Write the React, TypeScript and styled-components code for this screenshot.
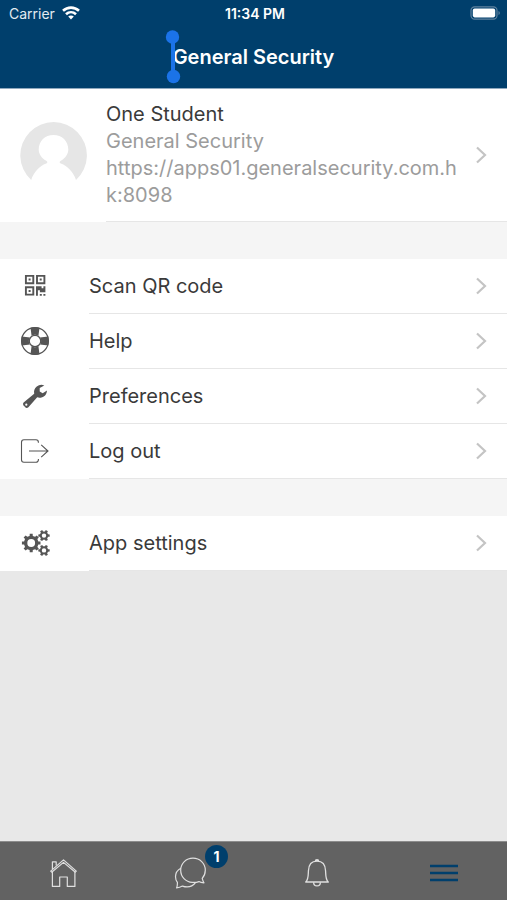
import React from "react";
import styled, { createGlobalStyle } from "styled-components";

const navy = "#003f6c";
const ink = "#3a3a3a";
const iconInk = "#555555";

const GlobalStyle = createGlobalStyle`
  *, *::before, *::after { box-sizing: border-box; }
  body { margin: 0; background: #e8e8e8; font-family: Inter, "Liberation Sans", sans-serif; }
  button { font: inherit; color: inherit; border: 0; padding: 0; background: none; cursor: pointer; text-align: left; }
  h1, h2, p { margin: 0; font-weight: 400; }
  svg { display: block; flex: none; }
`;

const Screen = styled.div`
  min-height: 100vh;
  display: flex;
  flex-direction: column;
  color: ${ink};
`;

const Header = styled.header`
  background: ${navy};
  color: #fff;
  border-bottom: 1px solid #8fa9bf;
`;

const StatusBar = styled.div`
  display: grid;
  grid-template-columns: 1fr auto 1fr;
  align-items: center;
  height: 26px;
  padding: 0 6px 0 9px;
  font-size: 14px;
`;

const Carrier = styled.span`
  display: flex;
  align-items: center;
  gap: 7px;
  color: #e3ebf1;
`;

const Clock = styled.time`
  font-size: 14px;
  font-weight: 600;
`;

const Battery = styled.span`
  justify-self: end;
`;

const TitleBar = styled.div`
  height: 62px;
  display: flex;
  justify-content: center;
  align-items: center;
`;

const Title = styled.h1`
  position: relative;
  font-size: 20px;
  line-height: 28px;
  font-weight: 600;
`;

const SelectionHandle = styled.svg`
  position: absolute;
  left: -8px;
  top: -13px;
`;

const Main = styled.main`
  flex: 1;
`;

const List = styled.div`
  background: #fff;
`;

const Gap = styled.div`
  height: 37px;
  background: #f5f5f5;
`;

const ProfileRow = styled.button`
  display: flex;
  align-items: center;
  width: 100%;
  padding-left: 20px;
`;

const ProfileBody = styled.span`
  flex: 1;
  min-width: 0;
  margin-left: 19px;
  padding: 11px 19px 12px 0;
  display: flex;
  align-items: center;
  border-bottom: 1px solid #e6e6e6;
`;

const ProfileText = styled.span`
  flex: 1;
  min-width: 0;
  max-width: 356px;
  margin-right: auto;
  display: flex;
  flex-direction: column;
  font-size: 20px;
  line-height: 27px;
  color: #9c9c9c;
  word-break: break-all;
`;

const ProfileName = styled.span`
  line-height: 28px;
  color: ${ink};
`;

const Row = styled.button`
  display: flex;
  align-items: center;
  width: 100%;
  height: 55px;
  padding-left: 20px;
`;

const RowIcon = styled.span`
  width: 69px;
  padding-bottom: 2px;
  color: ${iconInk};
`;

const RowBody = styled.span`
  flex: 1;
  height: 55px;
  display: flex;
  align-items: center;
  justify-content: space-between;
  padding-right: 19px;
  border-bottom: 1px solid #e6e6e6;
  font-size: 20px;
`;

const TabBar = styled.nav`
  display: grid;
  grid-template-columns: repeat(4, 1fr);
  height: 59px;
  background: #626262;
  border-top: 1px solid #8c8c8c;
`;

const Tab = styled.button<{ $active?: boolean }>`
  position: relative;
  display: flex;
  justify-content: center;
  align-items: center;
  padding-top: 3px;
  color: ${(p) => (p.$active ? navy : "#e0e0e0")};
`;

const TabBadge = styled.span`
  position: absolute;
  left: calc(50% + 15px);
  top: 3px;
  width: 23px;
  height: 23px;
  border-radius: 50%;
  background: ${navy};
  color: #fff;
  font-size: 14px;
  line-height: 23px;
  font-weight: 700;
  text-align: center;
`;

const Chevron = () => (
  <svg width="14" height="18" viewBox="0 0 14 18" fill="none" stroke="#c4c4c4" strokeWidth="2.2" aria-hidden>
    <path d="M3 1.5 11 9 3 16.5" />
  </svg>
);

const WifiIcon = () => (
  <svg width="18" height="14" viewBox="0 0 18 14" fill="none" stroke="#fff" strokeWidth="2.6" aria-label="Wi-Fi">
    <path d="M1 4.8C5.6.5 12.4.5 17 4.8" />
    <path d="M4 8.2C6.9 5.5 11.1 5.5 14 8.2" />
    <path d="M6.2 10.6C7.8 9.1 10.2 9.1 11.8 10.6L9 13.6Z" fill="#fff" stroke="none" />
  </svg>
);

const BatteryIcon = () => (
  <svg width="31" height="14" viewBox="0 0 31 14" aria-label="Battery full">
    <rect x="1" y=".8" width="26" height="12.4" rx="3.6" fill="none" stroke="#5f829e" strokeWidth="1.2" />
    <rect x="2.8" y="2.6" width="22.4" height="8.8" rx="1.8" fill="#fff" />
    <path d="M28.5 5v4c1.8-.6 1.8-3.4 0-4Z" fill="#5f829e" />
  </svg>
);

const Avatar = () => (
  <svg width="67" height="67" viewBox="0 0 67 67" aria-hidden>
    <path
      fill="#e6e6e6"
      d="M11.2 58A33.3 33.3 0 1 1 56 58C53.5 50 47.5 44 40.8 41.5C39.2 40.9 39.3 39.7 40.8 38.8C45.5 36 48.3 32 48.3 27.5C48.3 19 42 13 33.5 13S18.7 19 18.7 27.5C18.7 32 21.5 36 26.2 38.8C27.7 39.7 27.8 40.9 26.2 41.5C19.5 44 13.7 50 11.2 58Z"
    />
  </svg>
);

const QrIcon = () => (
  <svg width="30" height="30" viewBox="0 0 30 30" fill="none" stroke="currentColor" strokeWidth="1.9" aria-hidden>
    <path d="M5.9 4.9h7.4v7.4H5.9ZM17 4.9h7.4v7.4H17ZM5.9 16.2h7.4v7.4H5.9Z" />
    <path d="M8.6 7.6h2v2h-2ZM19.7 7.6h2v2h-2ZM8.6 18.9h2v2h-2Z" fill="currentColor" stroke="none" />
    <path
      fill="currentColor"
      stroke="none"
      d="M16 15.2h5.6v2h1.8v-2h2v6.1h-5.5v-2h-2v5.4H16ZM19.8 23h2v1.8h-2ZM23.4 23h2v1.8h-2Z"
    />
  </svg>
);

const BuoyIcon = () => (
  <svg width="30" height="30" viewBox="0 0 30 30" fill="none" stroke="currentColor" aria-hidden>
    <circle cx="15" cy="15" r="13.4" strokeWidth="1.2" />
    <circle cx="15" cy="15" r="5.7" strokeWidth="1.2" />
    <path
      fill="currentColor"
      stroke="none"
      d="M10.5 1.8a14 14 0 0 1 9 0L18.4 10a6 6 0 0 0-6.8 0ZM28.2 10.5a14 14 0 0 1 0 9L20 18.4a6 6 0 0 0 0-6.8ZM19.5 28.2a14 14 0 0 1-9 0L11.6 20a6 6 0 0 0 6.8 0ZM1.8 19.5a14 14 0 0 1 0-9L10 11.6a6 6 0 0 0 0 6.8Z"
    />
  </svg>
);

const WrenchIcon = () => (
  <svg width="30" height="30" viewBox="0 0 30 30" aria-hidden>
    <path
      fill="currentColor"
      fillRule="evenodd"
      d="M14.2 12.7A7.4 7.4 0 0 1 24.3 4.4L19.7 7.1V10.6L22.7 12.2L27 9.6A7.4 7.4 0 0 1 17.2 16.3L8.4 26.3A2.8 2.8 0 0 1 5.8 26.8L3.3 24.3A2.6 2.6 0 0 1 3.6 21.5ZM6.3 22.6a1.1 1.1 0 1 0 0 2.2a1.1 1.1 0 0 0 0-2.2Z"
    />
  </svg>
);

const LogoutIcon = () => (
  <svg width="30" height="30" viewBox="0 0 30 30" fill="none" stroke="currentColor" strokeWidth="1.1" aria-hidden>
    <path d="M18.4 6.7V6.2a2.4 2.4 0 0 0-2.4-2.4H3.9A2.4 2.4 0 0 0 1.5 6.2V23.8A2.4 2.4 0 0 0 3.9 26.2H16a2.4 2.4 0 0 0 2.4-2.4V23" />
    <path d="M9 15H28M21.2 8.8 28 15l-6.8 6.2" />
  </svg>
);

function gearPath(cx: number, cy: number, outer: number, inner: number, hole: number, teeth: number, start = 0) {
  const step = (Math.PI * 2) / teeth;
  const at = (radius: number, angle: number) =>
    `${(cx + radius * Math.cos(angle)).toFixed(2)} ${(cy + radius * Math.sin(angle)).toFixed(2)}`;
  const points: string[] = [];
  for (let i = 0; i < teeth; i++) {
    const a = start + i * step;
    points.push(at(inner, a - step * 0.28), at(outer, a - step * 0.2), at(outer, a + step * 0.2), at(inner, a + step * 0.28));
  }
  return `M${points.join("L")}ZM${cx - hole} ${cy}a${hole} ${hole} 0 1 0 ${hole * 2} 0a${hole} ${hole} 0 1 0 ${-hole * 2} 0Z`;
}

const GearsIcon = () => (
  <svg width="30" height="30" viewBox="0 0 30 30" fill="currentColor" fillRule="evenodd" aria-hidden>
    <path d={gearPath(11.2, 15, 9.4, 7.3, 3.9, 8)} />
    <path d={gearPath(24, 7.6, 5.8, 4.3, 2.2, 6)} />
    <path d={gearPath(24, 22.4, 5.8, 4.3, 2.2, 6)} />
  </svg>
);

const HomeIcon = () => (
  <svg width="30" height="30" viewBox="0 0 30 30" fill="none" stroke="currentColor" strokeWidth="1.2" strokeLinejoin="round" aria-hidden>
    <path d="M2.7 13.1 15.5 1.9 28.3 13.1 27.3 14.2 15.5 4.4 3.7 14.2Z" />
    <path d="M4.4 11V3.8H8.2V7.4M4.4 14V28.4H11.7V19H19.3V28.4H26.9V14" />
  </svg>
);

const ChatIcon = () => (
  <svg width="32" height="32" viewBox="0 0 32 32" fill="none" stroke="currentColor" strokeWidth="1.2" strokeLinejoin="round" aria-hidden>
    <path d="M30 25.8C27.9 25.7 26.3 25.4 24.9 24.6C22.9 25.3 20.5 25.6 18.3 25.4C11.6 24.9 6.7 19.7 6.7 13.2C6.7 6.4 12.2 1.2 19 1.2S31.3 6.4 31.3 13.2C31.3 16.4 30.2 19.1 28.2 21.3C28.6 22.9 29.1 24.5 30 25.8Z" />
    <path d="M6.8 11.2C3.5 13 1.5 16.1 1.5 19.7C1.5 22.3 2.4 24 3.4 25.4C3.5 27.4 3.2 29.3 2.6 30.9C4.8 30.8 6.6 30.2 8.4 29.1C13.3 30.7 18.5 29.5 21.5 25.6" />
  </svg>
);

const BellIcon = () => (
  <svg width="30" height="30" viewBox="0 0 30 30" fill="none" stroke="currentColor" strokeWidth="1.3" strokeLinejoin="round" aria-hidden>
    <path d="M3.7 24C6.4 21.8 6.2 18.6 6.4 13C6.6 7 9.4 3.2 15 3.2S23.4 7 23.6 13C23.8 18.6 23.6 21.8 26.3 24Z" />
    <path d="M11.6 24.2C11.6 29.2 18.4 29.2 18.4 24.2" />
    <path d="M12.7 3.2a2.3 2.2 0 0 1 4.6 0Z" fill="currentColor" stroke="none" />
  </svg>
);

const MenuIcon = () => (
  <svg width="28" height="20" viewBox="0 0 28 20" stroke="currentColor" strokeWidth="2.6" aria-hidden>
    <path d="M0 3H28M0 10H28M0 17H28" />
  </svg>
);

function MenuRow({ icon, label }: { icon: React.ReactNode; label: string }) {
  return (
    <Row type="button">
      <RowIcon>{icon}</RowIcon>
      <RowBody>
        {label}
        <Chevron />
      </RowBody>
    </Row>
  );
}

export default function App() {
  return (
    <Screen>
      <GlobalStyle />
      <Header>
        <StatusBar>
          <Carrier>
            Carrier
            <WifiIcon />
          </Carrier>
          <Clock>11:34 PM</Clock>
          <Battery>
            <BatteryIcon />
          </Battery>
        </StatusBar>
        <TitleBar>
          <Title>
            <SelectionHandle width="16" height="54" viewBox="0 0 16 54" fill="#1b73e8" aria-hidden>
              <rect x="6" y="7" width="4" height="40" />
              <circle cx="7.5" cy="7" r="6.7" />
              <circle cx="8.5" cy="46.5" r="6.7" />
            </SelectionHandle>
            General Security
          </Title>
        </TitleBar>
      </Header>
      <Main>
        <List>
          <ProfileRow type="button">
            <Avatar />
            <ProfileBody>
              <ProfileText>
                <ProfileName>One Student</ProfileName>
                <span>General Security</span>
                <span>https://apps01.generalsecurity.com.hk:8098</span>
              </ProfileText>
              <Chevron />
            </ProfileBody>
          </ProfileRow>
        </List>
        <Gap />
        <List>
          <MenuRow icon={<QrIcon />} label="Scan QR code" />
          <MenuRow icon={<BuoyIcon />} label="Help" />
          <MenuRow icon={<WrenchIcon />} label="Preferences" />
          <MenuRow icon={<LogoutIcon />} label="Log out" />
        </List>
        <Gap />
        <List>
          <MenuRow icon={<GearsIcon />} label="App settings" />
        </List>
      </Main>
      <TabBar>
        <Tab type="button" aria-label="Home">
          <HomeIcon />
        </Tab>
        <Tab type="button" aria-label="Messages">
          <ChatIcon />
          <TabBadge>1</TabBadge>
        </Tab>
        <Tab type="button" aria-label="Notifications">
          <BellIcon />
        </Tab>
        <Tab type="button" aria-label="More" $active>
          <MenuIcon />
        </Tab>
      </TabBar>
    </Screen>
  );
}
